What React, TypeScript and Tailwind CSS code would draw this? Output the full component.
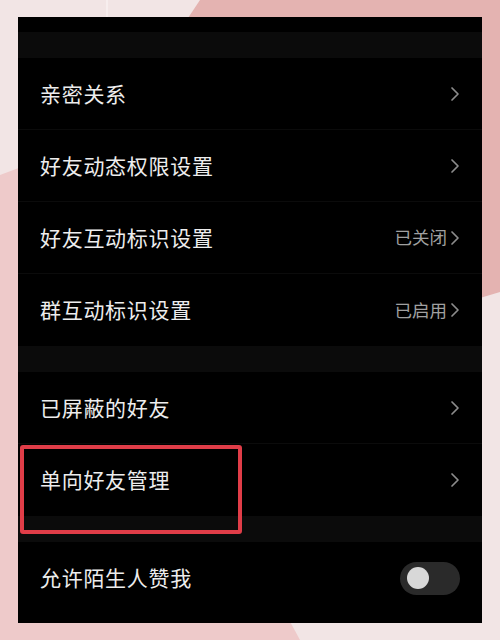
import React from 'react';

const font = { fontFamily: '"Noto Sans CJK SC", "Noto Sans", sans-serif' };

type Row = { label: string; value?: string; toggle?: boolean };

const groups: Row[][] = [
  [
    { label: '亲密关系' },
    { label: '好友动态权限设置' },
    { label: '好友互动标识设置', value: '已关闭' },
    { label: '群互动标识设置', value: '已启用' },
  ],
  [{ label: '已屏蔽的好友' }, { label: '单向好友管理' }],
  [{ label: '允许陌生人赞我', toggle: true }],
];

function Chevron() {
  return (
    <svg width="10" height="16" viewBox="0 0 10 16" className="ml-[3px]">
      <path d="M2 2 L8 8 L2 14" fill="none" stroke="#8c8c8c" strokeWidth="1.7" strokeLinecap="round" strokeLinejoin="round" />
    </svg>
  );
}

function Toggle() {
  return (
    <div className="w-[60px] h-[33px] rounded-full bg-[#2a2a2a] flex items-center px-[7px]">
      <div className="w-[22px] h-[22px] rounded-full bg-[#d8d8d8]" />
    </div>
  );
}

export default function App() {
  return (
    <div className="relative w-[500px] h-[640px] overflow-hidden bg-[#f2e5e5]" style={font}>
      <svg className="absolute inset-0" width="500" height="640" viewBox="0 0 500 640">
        <polygon points="0,175 40,160 300,640 0,640" fill="#eecaca" />
        <polygon points="200,0 500,0 500,292 440,310 120,120" fill="#e4b3b1" />
        <line x1="107" y1="0" x2="107" y2="17" stroke="#f7eeee" strokeWidth="2" />
      </svg>

      <div className="relative mx-[18px] mt-[17px] w-[464px] h-[606px] bg-black flex flex-col">
        <div className="h-[15px]" />
        {groups.map((rows, gi) => (
          <React.Fragment key={gi}>
            <div className="h-[26px] bg-[#0b0b0b]" />
            {rows.map((r, ri) => (
              <div
                key={r.label}
                className={`flex items-center justify-between pl-[22px] pr-[22px] h-[72px] ${ri < rows.length - 1 ? 'border-b border-[#0b0b0b]' : ''}`}
              >
                <span className="text-[21px] text-[#ededed] tracking-[0.7px]">{r.label}</span>
                {r.toggle ? (
                  <Toggle />
                ) : (
                  <div className="flex items-center">
                    {r.value && <span className="text-[17.5px] text-[#a0a0a0]">{r.value}</span>}
                    <Chevron />
                  </div>
                )}
              </div>
            ))}
          </React.Fragment>
        ))}

        <div className="absolute left-[2px] top-[428px] w-[222px] h-[89px] border-[4px] border-[#e03d48] rounded-[3px]" />
      </div>
    </div>
  );
}
